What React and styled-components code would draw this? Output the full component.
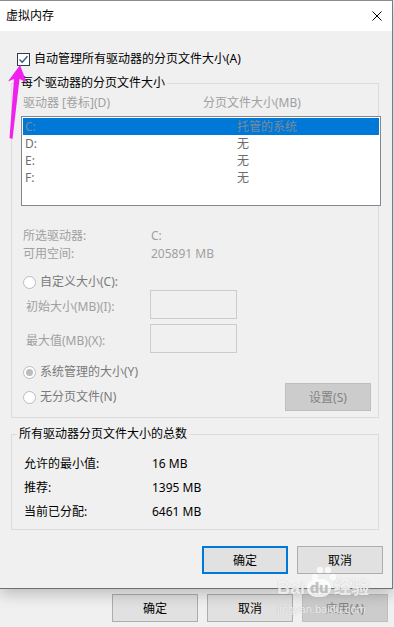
import React from 'react';
import styled, { createGlobalStyle, css } from 'styled-components';

const GlobalStyle = createGlobalStyle`
  html, body {
    margin: 0;
    padding: 0;
    background: #f0f0f0;
  }
`;

const FONT = `"Noto Sans", "Noto Sans CJK SC", sans-serif`;

export default function App() {
    const drives = [
        { name: 'C:', size: '托管的系统', selected: true },
        { name: 'D:', size: '无' },
        { name: 'E:', size: '无' },
        { name: 'F:', size: '无' },
    ];

    return (
        <Page>
            <GlobalStyle />
            <Dialog>
                <TitleBar>
                    <Title>虚拟内存</Title>
                    <CloseIcon viewBox="0 0 10 10">
                        <path d="M0.5 0.5 L9.5 9.5 M9.5 0.5 L0.5 9.5" stroke="#000" strokeWidth="1" fill="none" />
                    </CloseIcon>
                </TitleBar>

                <CheckRow>
                    <CheckBox>
                        <svg width="11" height="11" viewBox="0 0 11 11">
                            <path d="M1.5 5.5 L4.2 8.2 L9.5 2.2" stroke="#2a5585" strokeWidth="1.3" fill="none" />
                        </svg>
                    </CheckBox>
                    <span>自动管理所有驱动器的分页文件大小(A)</span>
                </CheckRow>

                <Group $mt={8}>
                    <Legend $ml={7}>每个驱动器的分页文件大小</Legend>
                    <GroupInner $pl={9} $pb={6}>
                        <ListHeader>
                            <span>驱动器 [卷标](D)</span>
                            <span>分页文件大小(MB)</span>
                        </ListHeader>
                        <ListBox>
                            {drives.map((d) => (
                                <ListRow key={d.name} $selected={d.selected}>
                                    <span>{d.name}</span>
                                    <span>{d.size}</span>
                                </ListRow>
                            ))}
                        </ListBox>

                        <InfoRow $first>
                            <span>所选驱动器:</span>
                            <span>C:</span>
                        </InfoRow>
                        <InfoRow>
                            <span>可用空间:</span>
                            <span>205891 MB</span>
                        </InfoRow>

                        <RadioRow $mt={11}>
                            <Radio />
                            <RadioLabel>自定义大小(C):</RadioLabel>
                        </RadioRow>
                        <FieldRow $mt={0}>
                            <FieldLabel>初始大小(MB)(I):</FieldLabel>
                            <TextBox />
                        </FieldRow>
                        <FieldRow $mt={5}>
                            <FieldLabel>最大值(MB)(X):</FieldLabel>
                            <TextBox />
                        </FieldRow>
                        <RadioRow $mt={11}>
                            <Radio $checked />
                            <RadioLabel>系统管理的大小(Y)</RadioLabel>
                        </RadioRow>
                        <SetRow>
                            <RadioGroup>
                                <Radio />
                                <RadioLabel>无分页文件(N)</RadioLabel>
                            </RadioGroup>
                            <Button $disabled>设置(S)</Button>
                        </SetRow>
                    </GroupInner>
                </Group>

                <Group $mt={8}>
                    <Legend $ml={5}>所有驱动器分页文件大小的总数</Legend>
                    <GroupInner $pl={12} $pb={5}>
                        <TotalsList>
                            <TotalRow>
                                <span>允许的最小值:</span>
                                <span>16 MB</span>
                            </TotalRow>
                            <TotalRow>
                                <span>推荐:</span>
                                <span>1395 MB</span>
                            </TotalRow>
                            <TotalRow>
                                <span>当前已分配:</span>
                                <span>6461 MB</span>
                            </TotalRow>
                        </TotalsList>
                    </GroupInner>
                </Group>

                <DialogButtons>
                    <Button $focused>确定</Button>
                    <Button>取消</Button>
                </DialogButtons>
            </Dialog>

            <ParentButtons>
                <Button>确定</Button>
                <Button>取消</Button>
                <Button $disabled>应用(A)</Button>
            </ParentButtons>

            <Arrow viewBox="0 0 40 150" width="40" height="150">
                <polygon points="20,65 26.5,82 19.5,79 12.5,139 9.5,138 14,79 8,81.5" fill="#f220ee" />
            </Arrow>

            <Watermark>
                <Paw viewBox="0 0 30 22" width="30" height="22">
                    <circle cx="6" cy="12" r="3.2" />
                    <circle cx="11" cy="5" r="3.2" />
                    <circle cx="19" cy="5" r="3.2" />
                    <circle cx="24" cy="12" r="3.2" />
                </Paw>
                <BrandLine>
                    <span>Bai</span>
                    <DuBlob>du</DuBlob>
                    <span>经验</span>
                </BrandLine>
                <Domain>jingyan.baidu.com</Domain>
            </Watermark>
        </Page>
    );
}

const Page = styled.div`
  position: relative;
  width: 394px;
  height: 627px;
  overflow: hidden;
  background: #f0f0f0;
  font-family: ${FONT};
  font-size: 12px;
  color: #000;
`;

const Dialog = styled.div`
  width: 393px;
  box-sizing: border-box;
  background: #f0f0f0;
  border-top: 1px solid #8c8c8c;
  border-right: 1px solid #7a7a7a;
  border-bottom: 1px solid #6f6f6f;
  padding-bottom: 14px;
  box-shadow: 0 5px 14px rgba(0, 0, 0, 0.22);
  position: relative;
  z-index: 1;
`;

const TitleBar = styled.div`
  height: 30px;
  background: #fff;
  display: flex;
  align-items: center;
  justify-content: space-between;
  padding: 0 10px 0 6px;
`;

const Title = styled.span`
  font-size: 12px;
  line-height: 16px;
`;

const CloseIcon = styled.svg`
  width: 10px;
  height: 10px;
`;

const CheckRow = styled.label`
  display: flex;
  align-items: center;
  gap: 4px;
  height: 16px;
  margin-top: 20px;
  padding-left: 17px;
  line-height: 16px;
`;

const CheckBox = styled.span`
  width: 13px;
  height: 13px;
  box-sizing: border-box;
  border: 1px solid #2b3c4f;
  background: #fff;
  display: flex;
  align-items: center;
  justify-content: center;
`;

const Group = styled.fieldset`
  margin: ${(p) => p.$mt}px 0 0 11px;
  padding: 0;
  width: 368px;
  box-sizing: border-box;
  border: 1px solid #dcdcdc;
  min-width: 0;
`;

const Legend = styled.legend`
  margin-left: ${(p) => p.$ml}px;
  padding: 0 2px;
  line-height: 16px;
  font-size: 12px;
  color: #000;
`;

const GroupInner = styled.div`
  padding: 0 7px ${(p) => p.$pb}px ${(p) => p.$pl}px;
`;

const disabledText = '#a0a0a0';

const ListHeader = styled.div`
  display: grid;
  grid-template-columns: 180px 1fr;
  margin-top: 4px;
  padding-left: 2px;
  height: 16px;
  line-height: 16px;
  color: ${disabledText};
`;

const ListBox = styled.div`
  margin-top: 5px;
  width: 360px;
  height: 90px;
  box-sizing: border-box;
  border: 1px solid #828790;
  background: #fff;
  padding: 1px;
`;

const ListRow = styled.div`
  display: grid;
  grid-template-columns: 212px 1fr;
  height: 17px;
  line-height: 17px;
  padding-left: 2px;
  color: #6d6d6d;
  ${(p) =>
        p.$selected &&
        css`
      background: #0078d7;
      color: #7b8a99;
    `}
`;

const InfoRow = styled.div`
  display: grid;
  grid-template-columns: 128px 1fr;
  margin-top: ${(p) => (p.$first ? 21 : 0)}px;
  padding-left: 2px;
  height: 18px;
  line-height: 18px;
  color: ${disabledText};
`;

const RadioRow = styled.div`
  display: flex;
  align-items: center;
  gap: 4px;
  margin-top: ${(p) => p.$mt}px;
  padding-left: 2px;
  height: 16px;
`;

const RadioGroup = styled.div`
  display: flex;
  align-items: center;
  gap: 4px;
`;

const Radio = styled.span`
  width: 13px;
  height: 13px;
  box-sizing: border-box;
  border-radius: 50%;
  border: 1px solid #bcbcbc;
  background: #fff;
  display: flex;
  align-items: center;
  justify-content: center;
  &::after {
    content: '';
    width: 7px;
    height: 7px;
    border-radius: 50%;
    background: ${(p) => (p.$checked ? '#bcbcbc' : 'transparent')};
  }
`;

const RadioLabel = styled.span`
  line-height: 16px;
  color: #7a7a7a;
`;

const FieldRow = styled.div`
  display: flex;
  align-items: center;
  margin-top: ${(p) => p.$mt}px;
  padding-left: 5px;
  height: 29px;
`;

const FieldLabel = styled.span`
  width: 124px;
  padding-top: 4px;
  line-height: 16px;
  color: ${disabledText};
`;

const TextBox = styled.div`
  width: 87px;
  height: 29px;
  box-sizing: border-box;
  border: 1px solid #cccccc;
  background: #f0f0f0;
`;

const SetRow = styled.div`
  display: flex;
  align-items: center;
  justify-content: space-between;
  margin-top: 3px;
  padding-left: 2px;
  height: 28px;
`;

const Button = styled.button`
  width: 86px;
  height: 28px;
  box-sizing: border-box;
  padding: 0;
  font-family: ${FONT};
  font-size: 12px;
  color: #000;
  background: #e1e1e1;
  border: 1px solid #adadad;
  ${(p) =>
        p.$focused &&
        css`
      border: 2px solid #0078d7;
    `}
  ${(p) =>
        p.$disabled &&
        css`
      background: #cccccc;
      border-color: #bfbfbf;
      color: #838383;
    `}
`;

const TotalsList = styled.div`
  margin-top: 10px;
`;

const TotalRow = styled.div`
  display: grid;
  grid-template-columns: 128px 1fr;
  height: 24px;
  line-height: 24px;
`;

const DialogButtons = styled.div`
  display: flex;
  justify-content: flex-end;
  gap: 9px;
  margin-top: 16px;
  padding-right: 9px;
`;

const ParentButtons = styled.div`
  display: flex;
  justify-content: flex-end;
  gap: 9px;
  margin-top: 5px;
  padding-right: 6px;
`;

const Arrow = styled.svg`
  position: absolute;
  left: 0;
  top: 0;
  z-index: 3;
`;

const Watermark = styled.div`
  position: absolute;
  left: 277px;
  top: 566px;
  z-index: 4;
  white-space: nowrap;
  color: rgba(255, 255, 255, 0.8);
  text-shadow: 0 0 1px rgba(120, 120, 120, 0.45);
  pointer-events: none;
`;

const Paw = styled.svg`
  position: absolute;
  left: 32px;
  top: -1px;
  fill: rgba(255, 255, 255, 0.75);
`;

const BrandLine = styled.div`
  display: flex;
  align-items: center;
  margin-top: 11px;
  font-family: "Liberation Sans", "Noto Sans CJK SC", sans-serif;
  font-weight: bold;
  font-size: 18px;
  line-height: 22px;
`;

const DuBlob = styled.span`
  margin: 0 2px;
  padding: 0 3px;
  border-radius: 9px;
  background: rgba(255, 255, 255, 0.75);
  color: rgba(190, 190, 190, 0.9);
  font-size: 15px;
  line-height: 18px;
`;

const Domain = styled.div`
  margin-top: 4px;
  font-family: "Liberation Sans", sans-serif;
  font-size: 11px;
  line-height: 12px;
`;
